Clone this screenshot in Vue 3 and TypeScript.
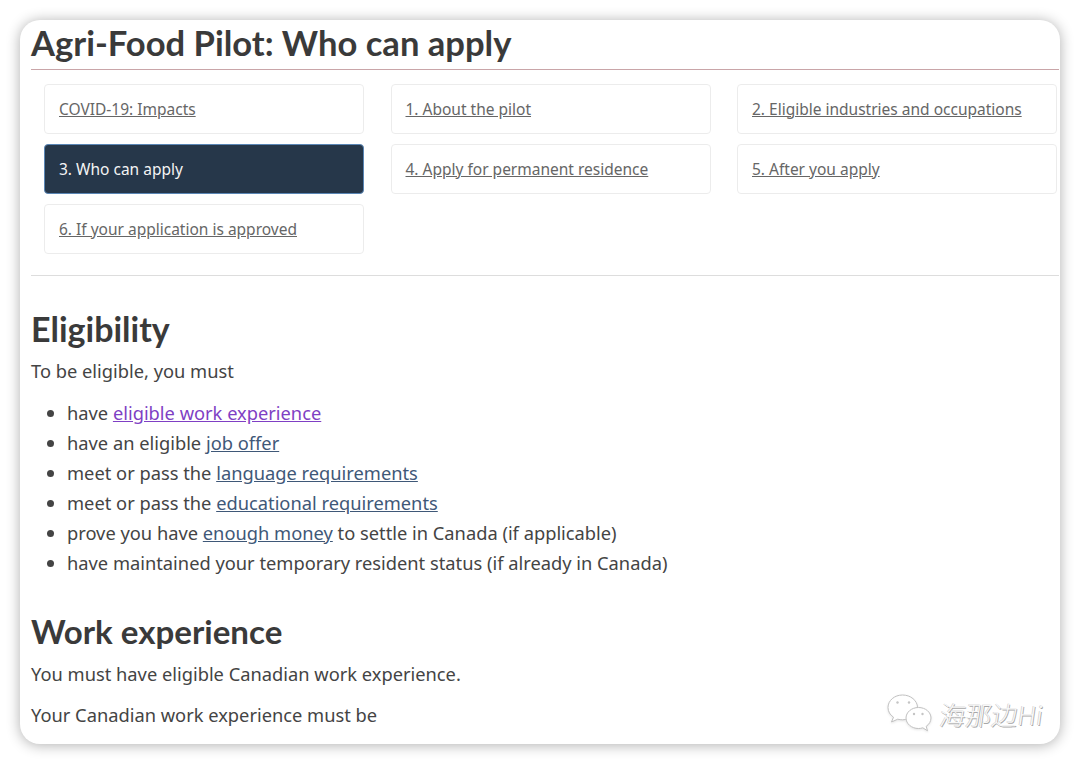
<script setup lang="ts">
const tabs = [
  { t: 'COVID-19: Impacts' },
  { t: '1. About the pilot' },
  { t: '2. Eligible industries and occupations' },
  { t: '3. Who can apply', active: true },
  { t: '4. Apply for permanent residence' },
  { t: '5. After you apply' },
  { t: '6. If your application is approved' },
]
</script>

<template>
  <div class="page">
    <div class="card">
      <h1>Agri-Food Pilot: Who can apply</h1>
      <nav class="tabs">
        <div v-for="x in tabs" :key="x.t" class="tab" :class="{ active: x.active }">
          <span :class="{ u: !x.active }">{{ x.t }}</span>
        </div>
      </nav>
      <hr />
      <h2 class="h-first">Eligibility</h2>
      <p>To be eligible, you must</p>
      <ul>
        <li>have <a class="visited">eligible work experience</a></li>
        <li>have an eligible <a>job offer</a></li>
        <li>meet or pass the <a>language requirements</a></li>
        <li>meet or pass the <a>educational requirements</a></li>
        <li>prove you have <a>enough money</a> to settle in Canada (if applicable)</li>
        <li>have maintained your temporary resident status (if already in Canada)</li>
      </ul>
      <h2 class="h-second">Work experience</h2>
      <p>You must have eligible Canadian work experience.</p>
      <p class="last">Your Canadian work experience must be</p>
      <div class="mark">
        <svg class="mark-icon" width="48" height="40" viewBox="0 0 48 40" stroke="#c0c0c0" stroke-width="1">
          <path fill="#fff" d="M15.500 1C7.500 1 1 6.500 1 13.500c0 4 2 7.300 5.500 9.700L4.500 28l6.200-2.800c1.600.4 3.200.6 4.800.6 8 0 15-5.500 15-12.300C30.500 6.500 23.500 1 15.500 1Z" />
          <path fill="#fff" d="M31.500 13.500c-7 0-12.500 4.800-12.500 10.500s5.500 10.500 12.500 10.500c1.500 0 3-.2 4.300-.7l4.700 3-1.300-4.500c3-2 4.800-5 4.800-8.300 0-5.700-5.500-10.500-12.500-10.500Z" />
          <circle cx="10.500" cy="8.500" r="1.200" fill="#c4c4c4" stroke="none" />
          <circle cx="22" cy="8.500" r="1.200" fill="#c4c4c4" stroke="none" />
          <circle cx="27" cy="20" r="1.200" fill="#c4c4c4" stroke="none" />
          <circle cx="35.500" cy="20" r="1.200" fill="#c4c4c4" stroke="none" />
        </svg>
        <span class="mark-text">海那边Hi</span>
      </div>
    </div>
  </div>
</template>

<style>
html, body { margin: 0; background: #fff; }
</style>

<style scoped>
.page {
  width: 1080px;
  height: 764px;
  padding: 20px;
  box-sizing: border-box;
  background: #fff;
  overflow: hidden;
}
.card {
  position: relative;
  width: 1040px;
  height: 724px;
  box-sizing: border-box;
  padding: 0 0 0 11px;
  background: #fff;
  border-radius: 20px;
  box-shadow: 0 1px 14px rgba(0, 0, 0, .32);
  overflow: hidden;
  font-family: "Noto Sans", sans-serif;
  color: #444;
  font-size: 18.300px;
  line-height: 30px;
}
h1, h2 { font-family: Lato, sans-serif; font-weight: 700; margin: 0; color: #3a3a3a; }
h1 {
  font-size: 34.600px;
  line-height: 46px;
  height: 49px;
  margin-right: 1px;
  border-bottom: 1px solid #c9a5a8;
}
.tabs {
  display: grid;
  grid-template-columns: repeat(3, 320px);
  column-gap: 26.500px;
  row-gap: 10px;
  padding: 14px 0 0 13px;
}
.tab {
  height: 50px;
  box-sizing: border-box;
  border: 1px solid #ececec;
  border-radius: 4px;
  padding: 0 14px 1px;
  display: flex;
  align-items: center;
  font-size: 15.500px;
  color: #666;
  white-space: nowrap;
}
.tab .u { text-decoration: underline; }
.tab.active { background: #26374a; color: #f4f4f4; border-color: #5a86b5; }
hr { border: 0; border-top: 1px solid #ddd; margin: 21px 1px 0 0; }
.h-first { font-size: 34px; line-height: 40px; margin-top: 33px; }
.h-second { font-size: 33.100px; line-height: 40px; margin-top: 33px; }
p { margin: 0; }
.h-first + p { margin-top: 7px; }
.h-second + p { margin-top: 8px; }
.last { margin-top: 11px; }
ul { margin: 12px 0 0; padding: 0 0 0 36px; }
li { height: 30px; }
a { color: #3f5878; text-decoration: underline; }
a.visited { color: #7f3fc4; }
.mark {
  position: absolute;
  left: 867px;
  top: 674px;
  display: flex;
  align-items: center;
  gap: 5px;
}
.mark-icon { filter: drop-shadow(0 1px 1px rgba(0, 0, 0, .1)); }
.mark-text {
  display: block;
  color: #f8f8f8;
  font-family: "Noto Sans CJK SC", sans-serif;
  font-size: 26px;
  line-height: 40px;
  font-weight: 300;
  transform: skewX(-8deg);
  text-shadow: 1px 1px 0 #a8a8a8, -0.500px 0 0 #c4c4c4;
}
</style>
